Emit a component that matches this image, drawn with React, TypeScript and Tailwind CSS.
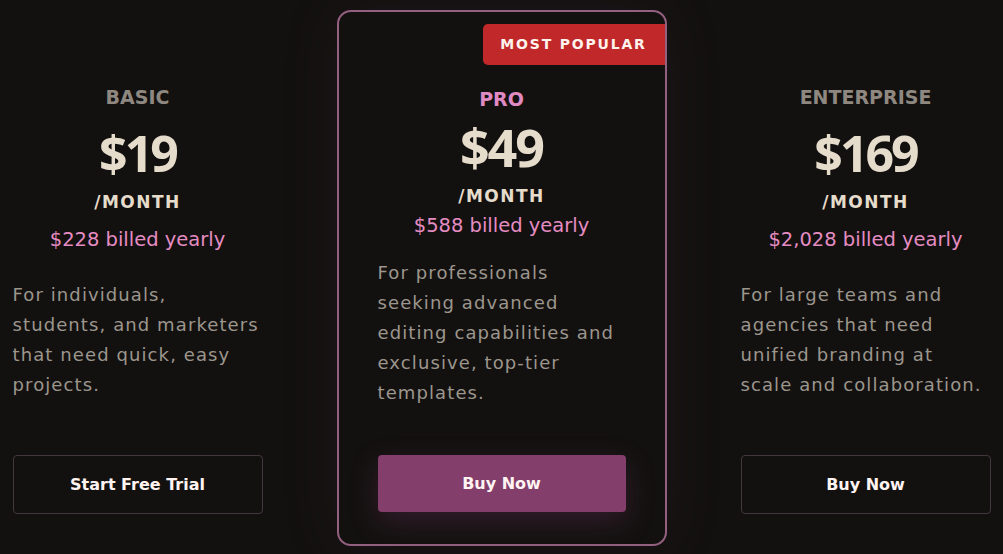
const body = "font-['DejaVu_Sans',sans-serif]";
const priceFont = "font-['Open_Sans','Liberation_Sans',sans-serif]";

type Plan = {
  name: string;
  price: string;
  yearly: string;
  desc: string;
  cta: string;
  featured?: boolean;
};

const plans: Plan[] = [
  {
    name: 'BASIC',
    price: '$19',
    yearly: '$228 billed yearly',
    desc: 'For individuals, students, and marketers that need quick, easy projects.',
    cta: 'Start Free Trial',
  },
  {
    name: 'PRO',
    price: '$49',
    yearly: '$588 billed yearly',
    desc: 'For professionals seeking advanced editing capabilities and exclusive, top-tier templates.',
    cta: 'Buy Now',
    featured: true,
  },
  {
    name: 'ENTERPRISE',
    price: '$169',
    yearly: '$2,028 billed yearly',
    desc: 'For large teams and agencies that need unified branding at scale and collaboration.',
    cta: 'Buy Now',
  },
];

function PlanCard({ plan }: { plan: Plan }) {
  const f = plan.featured;
  return (
    <div className="w-[364px] shrink-0 flex justify-center">
      <div
        className={`relative w-[330px] h-[536px] mt-[10px] flex flex-col rounded-[14px] border-2 ${
          f
            ? 'border-[#93607f] px-[39px] pb-[32px] shadow-[0_0_60px_rgba(120,60,100,0.10)]'
            : 'border-transparent px-[38px] pb-[30px]'
        }`}
      >
        {f && (
          <div className="absolute top-[12px] right-0 w-[182px] h-[41px] rounded-l-[5px] bg-[#c0282a] flex items-center justify-center">
            <span className={`${body} text-[14px] font-bold tracking-[1.8px] text-[#fff3ee]`}>MOST POPULAR</span>
          </div>
        )}

        <p
          className={`${body} text-center text-[19px] leading-[24px] font-bold ${
            f ? 'mt-[75px] text-[#e08ac4]' : 'mt-[73px] text-[#8e8880]'
          }`}
        >
          {plan.name}
        </p>
        <p
          className={`${priceFont} text-center ${f ? 'text-[52px] tracking-[-2px]' : 'text-[50px] tracking-[-3px]'} leading-[56px] font-bold text-[#e6dccb] ${
            f ? 'mt-[8px]' : 'mt-[16px]'
          }`}
        >
          {plan.price}
        </p>
        <p className={`${body} text-center text-[17px] leading-[22px] font-bold tracking-[1.5px] text-[#e6dccb] mt-[10px]`}>
          /MONTH
        </p>
        <p
          className={`${body} text-center text-[19.5px] leading-[26px] text-[#e58cc2] ${f ? 'mt-[6px]' : 'mt-[14px]'}`}
        >
          {plan.yearly}
        </p>
        <p
          className={`${body} text-[18px] leading-[30px] tracking-[1.1px] text-[#9c968d] ${f ? 'mt-[19px]' : 'mt-[27px]'}`}
        >
          {plan.desc}
        </p>

        <button
          className={`${body} mt-auto w-full rounded-[4px] text-[16px] font-bold text-[#fff4f2] ${
            f
              ? 'h-[57px] bg-[#843e6b] shadow-[0_10px_28px_rgba(132,62,107,0.28)]'
              : 'h-[59px] border border-[#45353f]'
          }`}
        >
          {plan.cta}
        </button>
      </div>
    </div>
  );
}

export default function App() {
  return (
    <div className="w-full h-[554px] bg-[#131110] overflow-hidden">
      <div className="flex justify-center">
        {plans.map((p) => (
          <PlanCard key={p.name} plan={p} />
        ))}
      </div>
    </div>
  );
}
